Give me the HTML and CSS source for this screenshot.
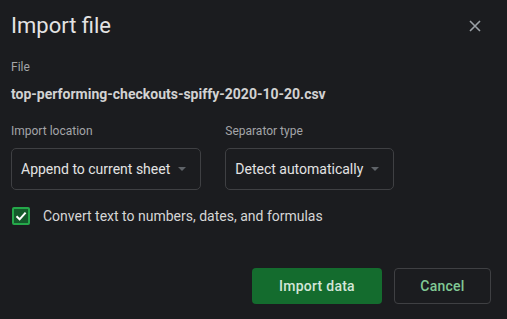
FILE: index.html
```html
<!DOCTYPE html>
<html lang="en">
<head>
    <meta charset="UTF-8">
    <title>Import file</title>
    <link rel="stylesheet" href="styles.css">
</head>
<body>
    <div class="dialog">
        <div class="header">
            <div class="title">Import file</div>
            <button class="close-btn" type="button" aria-label="Close">
                <svg width="12" height="12" viewBox="0 0 12 12">
                    <path d="M1 1 L11 11 M11 1 L1 11" stroke="#9aa0a6" stroke-width="1.6" fill="none"/>
                </svg>
            </button>
        </div>

        <div class="field-label file-label">File</div>
        <div class="file-name">top-performing-checkouts-spiffy-2020-10-20.csv</div>

        <div class="selects">
            <div class="select-group">
                <div class="field-label">Import location</div>
                <div class="select">
                    <span>Append to current sheet</span>
                    <span class="arrow"></span>
                </div>
            </div>
            <div class="select-group">
                <div class="field-label">Separator type</div>
                <div class="select">
                    <span>Detect automatically</span>
                    <span class="arrow"></span>
                </div>
            </div>
        </div>

        <label class="check-row">
            <span class="checkbox">
                <svg width="14" height="14" viewBox="0 0 14 14">
                    <path d="M2.5 7.3 L5.6 10.3 L11.6 3.6" stroke="#ffffff" stroke-width="2" fill="none"/>
                </svg>
            </span>
            <span>Convert text to numbers, dates, and formulas</span>
        </label>

        <div class="buttons">
            <button class="btn btn-primary" type="button">Import data</button>
            <button class="btn btn-cancel" type="button">Cancel</button>
        </div>
    </div>
</body>
</html>
```

FILE: styles.css
```css
* {
    margin: 0;
    padding: 0;
    box-sizing: border-box;
}

body {
    background: #1b1c1f;
    font-family: Roboto, "Liberation Sans", sans-serif;
    color: #e3e3e3;
}

.dialog {
    width: 507px;
    height: 319px;
    padding: 12px 16px 0 11px;
    display: flex;
    flex-direction: column;
}

.header {
    display: flex;
    justify-content: space-between;
    align-items: center;
    height: 28px;
}

.title {
    font-size: 22px;
    line-height: 28px;
    color: #e3e3e3;
}

.close-btn {
    background: none;
    border: none;
    width: 12px;
    height: 12px;
    margin-right: 10px;
    display: flex;
    cursor: pointer;
}

.field-label {
    font-size: 12px;
    line-height: 16px;
    color: #a3a5a8;
}

.file-label {
    margin-top: 19px;
}

.file-name {
    margin-top: 9px;
    font-size: 14px;
    line-height: 20px;
    font-weight: 700;
    color: #d2d2d2;
}

.selects {
    display: flex;
    gap: 24px;
    margin-top: 19px;
}

.select {
    margin-top: 9px;
    height: 42px;
    display: flex;
    align-items: center;
    gap: 8px;
    padding: 0 14px 0 9px;
    border: 1px solid #3f4043;
    border-radius: 5px;
    font-size: 14px;
    color: #e3e3e3;
}

.arrow {
    width: 0;
    height: 0;
    border-left: 4.5px solid transparent;
    border-right: 4.5px solid transparent;
    border-top: 4.5px solid #5f6368;
}

.check-row {
    display: flex;
    align-items: center;
    gap: 13px;
    margin-top: 17px;
    margin-left: 1px;
    font-size: 14px;
    line-height: 18px;
    color: #d6d6d6;
}

.checkbox {
    width: 18px;
    height: 18px;
    border: 2px solid #25a84a;
    border-radius: 2px;
    background: #145a2b;
    display: flex;
    align-items: center;
    justify-content: center;
}

.buttons {
    display: flex;
    justify-content: flex-end;
    gap: 12px;
    margin-top: 43px;
}

.btn {
    height: 36px;
    border-radius: 4px;
    font-family: Roboto, "Liberation Sans", sans-serif;
    font-size: 14px;
    font-weight: 500;
    letter-spacing: 0.25px;
    cursor: pointer;
}

.btn-primary {
    width: 130px;
    background: #146c2e;
    border: none;
    color: #d3e6d8;
}

.btn-cancel {
    width: 97px;
    background: transparent;
    border: 1px solid #3f4043;
    color: #81c995;
}
```
